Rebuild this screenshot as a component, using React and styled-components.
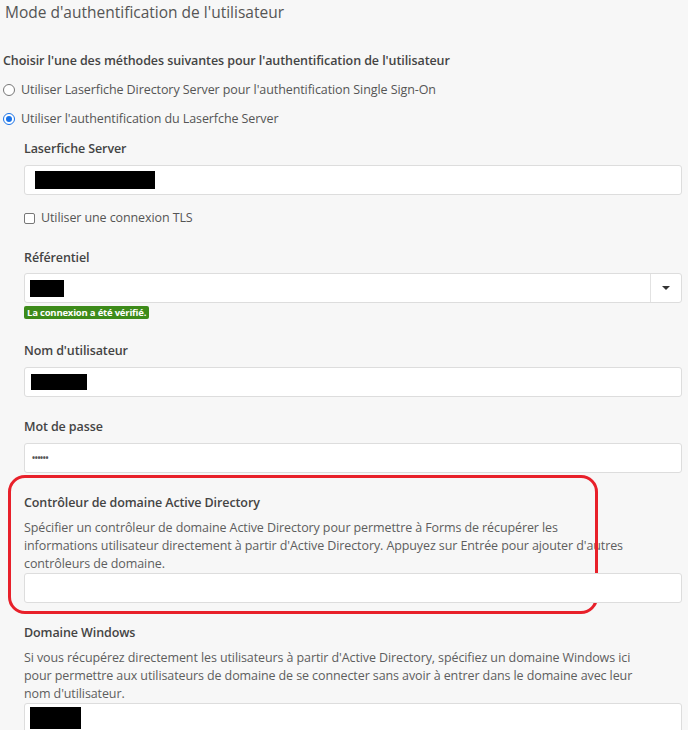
import React from 'react';
import styled, { createGlobalStyle } from 'styled-components';

const Global = createGlobalStyle`
  body {
    margin: 0;
    background: #f7f7f7;
    font-family: "Open Sans", "Liberation Sans", sans-serif;
    color: #555;
  }
`;

const Page = styled.div`
  padding: 2px 6px 0 3px;
  width: 688px;
  box-sizing: border-box;
  height: 730px;
  overflow: hidden;
`;

const Titre = styled.h1`
  margin: 0 0 30px 2px;
  font-size: 15.5px;
  line-height: 20px;
  font-weight: 400;
  color: #555;
`;

const SousTitre = styled.div`
  font-size: 12.5px;
  font-weight: 600;
  line-height: 18px;
  color: #444;
  letter-spacing: -0.08px;
  margin-bottom: 11px;
`;

const Option = styled.label`
  display: flex;
  align-items: center;
  gap: 6px;
  font-size: 12.5px;
  line-height: 18px;
  letter-spacing: -0.08px;
  color: #555;
  margin-bottom: 11px;
`;

const Radio = styled.span`
  width: 10px;
  height: 10px;
  border-radius: 50%;
  border: 1px solid ${p => (p.$checked ? '#1a73e8' : '#777')};
  background: #fff;
  display: flex;
  align-items: center;
  justify-content: center;
  flex-shrink: 0;
  &::after {
    content: '';
    display: ${p => (p.$checked ? 'block' : 'none')};
    width: 6px;
    height: 6px;
    border-radius: 50%;
    background: #1a73e8;
  }
`;

const Section = styled.div`
  margin-left: 21px;
  padding-top: 1px;
`;

const Groupe = styled.div`
  position: relative;
  margin-bottom: ${p => p.$mb ?? 21}px;
`;

const Libelle = styled.div`
  font-size: 12.5px;
  font-weight: 600;
  line-height: 18px;
  color: #444;
  letter-spacing: -0.1px;
  margin-bottom: ${p => p.$mb ?? 7}px;
`;

const Description = styled.div`
  font-size: 12.5px;
  line-height: 18px;
  color: #5e5e5e;
  letter-spacing: -0.1px;
  padding-right: 30px;
`;

const Champ = styled.div`
  height: 30px;
  box-sizing: border-box;
  background: #fff;
  border: 1px solid #ddd;
  border-radius: 3px;
  display: flex;
  align-items: center;
  padding-left: ${p => p.$pl || 6}px;
  position: relative;
`;

const Masque = styled.span`
  display: block;
  background: #000;
  width: ${p => p.$w}px;
  height: ${p => p.$h || 18}px;
`;

const Points = styled.span`
  font-size: 8px;
  letter-spacing: -0.3px;
  color: #555;
  font-weight: 700;
  line-height: 1;
`;

const Fleche = styled.div`
  margin-left: auto;
  width: 30px;
  align-self: stretch;
  border-left: 1px solid #e2e2e2;
  display: flex;
  align-items: center;
  justify-content: center;
  &::after {
    content: '';
    border-left: 4px solid transparent;
    border-right: 4px solid transparent;
    border-top: 4px solid #333;
  }
`;

const Badge = styled.span`
  display: block;
  width: fit-content;
  margin-top: 3px;
  background: #3d8b1a;
  color: #fff;
  font-size: 9.5px;
  font-weight: 700;
  line-height: 13px;
  padding: 0 3px;
  border-radius: 2px;
  letter-spacing: -0.2px;
`;

const CaseCocher = styled.label`
  display: flex;
  align-items: center;
  gap: 6px;
  font-size: 12.5px;
  line-height: 18px;
  color: #555;
  letter-spacing: -0.1px;
  margin: 14px 0 22px;
`;

const Case = styled.span`
  width: 9px;
  height: 9px;
  border: 1px solid #777;
  border-radius: 2px;
  background: #fff;
`;

const Surlignage = styled.div`
  position: absolute;
  left: -16px;
  top: -19px;
  width: 590px;
  height: 139px;
  box-sizing: border-box;
  border: 3px solid #e8202a;
  border-radius: 17px;
  pointer-events: none;
`;

export default function App() {
  return (
    <>
      <Global />
      <Page>
        <Titre>Mode d'authentification de l'utilisateur</Titre>
        <SousTitre>Choisir l'une des méthodes suivantes pour l'authentification de l'utilisateur</SousTitre>
        <Option><Radio />Utiliser Laserfiche Directory Server pour l'authentification Single Sign-On</Option>
        <Option><Radio $checked />Utiliser l'authentification du Laserfche Server</Option>
        <Section>
          <Groupe $mb={0}>
            <Libelle>Laserfiche Server</Libelle>
            <Champ $pl={10}><Masque $w={120} /></Champ>
          </Groupe>
          <CaseCocher><Case />Utiliser une connexion TLS</CaseCocher>
          <Groupe $mb={23}>
            <Libelle $mb={6}>Référentiel</Libelle>
            <Champ $pl={5}><Masque $w={34} $h={17} /><Fleche /></Champ>
            <Badge>La connexion a été vérifié.</Badge>
          </Groupe>
          <Groupe>
            <Libelle>Nom d'utilisateur</Libelle>
            <Champ $pl={6}><Masque $w={56} $h={16} /></Champ>
          </Groupe>
          <Groupe>
            <Libelle>Mot de passe</Libelle>
            <Champ $pl={7}><Points>••••••</Points></Champ>
          </Groupe>
          <Groupe>
            <Surlignage />
            <Libelle>Contrôleur de domaine Active Directory</Libelle>
            <Description>
              Spécifier un contrôleur de domaine Active Directory pour permettre à Forms de récupérer les<br />
              informations utilisateur directement à partir d'Active Directory. Appuyez sur Entrée pour ajouter d'autres contrôleurs de domaine.
            </Description>
            <Champ />
          </Groupe>
          <Groupe>
            <Libelle>Domaine Windows</Libelle>
            <Description>
              Si vous récupérez directement les utilisateurs à partir d'Active Directory, spécifiez un domaine Windows ici pour permettre aux utilisateurs de domaine de se connecter sans avoir à entrer dans le domaine avec leur nom d'utilisateur.
            </Description>
            <Champ $pl={5}><Masque $w={51} $h={22} /></Champ>
          </Groupe>
        </Section>
      </Page>
    </>
  );
}
